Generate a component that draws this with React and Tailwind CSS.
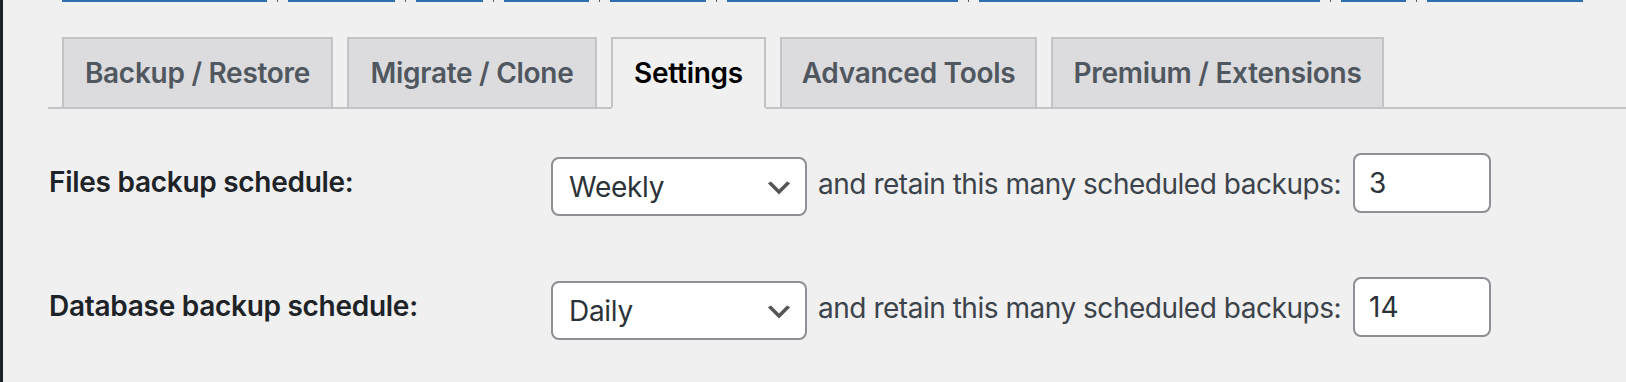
export default function App() {
  const links = [205, 107, 67, 85, 96, 231, 341, 65, 156];
  const tabs = [
    { label: "Backup / Restore", w: "w-[271px]" },
    { label: "Migrate / Clone", w: "w-[250px]" },
    { label: "Settings", w: "w-[155px]", active: true },
    { label: "Advanced Tools", w: "w-[257px]" },
    { label: "Premium / Extensions", w: "w-[333px]" },
  ];
  const rows = [
    { label: "Files backup schedule:", value: "Weekly", keep: "3" },
    { label: "Database backup schedule:", value: "Daily", keep: "14" },
  ];
  return (
    <div className="flex h-[382px] w-[1626px] overflow-hidden bg-[#f0f0f1] [font-family:Inter,'Liberation_Sans',sans-serif]">
      <div className="w-[3px] shrink-0 bg-[#1d2327]" />
      <div className="flex-1 pl-[45px]">
        <div className="ml-[14px] flex h-[2px] items-start gap-[10px]">
          {links.map((w, i) => (
            <div key={i} className="flex items-start gap-[10px]">
              {i > 0 && <div className="h-[2px] w-[1px] bg-[#50575e]" />}
              <div className="h-[2px] bg-[#2f6fb0]" style={{ width: w }} />
            </div>
          ))}
        </div>
        <div className="mt-[35px] flex h-[70px] items-start border-b-2 border-[#c3c4c7] box-content">
          {tabs.map((t) => (
            <div
              key={t.label}
              className={
                t.active
                  ? `ml-[14px] flex h-[72px] items-center justify-center border-2 border-[#c3c4c7] border-b-[#f0f0f1] bg-[#f0f0f1] text-[28px] font-semibold leading-[48px] text-black ${t.w}`
                  : `ml-[14px] flex h-[70px] items-center justify-center border-2 border-b-0 border-[#c3c4c7] bg-[#dcdcde] text-[28px] font-semibold leading-[48px] text-[#50575e] ${t.w}`
              }
            >
              <span className="whitespace-nowrap tracking-[-0.01em]">{t.label}</span>
            </div>
          ))}
        </div>
        <div className="mt-[44px] flex flex-col gap-[64px] pl-[1px]">
          {rows.map((r) => (
            <div key={r.label} className="flex h-[60px] items-start">
              <div className="mt-[9px] w-[502px] shrink-0 whitespace-nowrap text-[28px] font-semibold leading-[40px] tracking-[-0.01em] text-[#1d2327]">
                {r.label}
              </div>
              <div className="mt-[4px] flex h-[59px] w-[256px] shrink-0 items-center justify-between rounded-[8px] border-2 border-[#8c8f94] bg-white pl-[16px] pr-[10px]">
                <span className="text-[28px] leading-[40px] tracking-[-0.01em] text-[#2c3338]">{r.value}</span>
                <svg className="mt-[2px]" width="32" height="32" viewBox="0 0 20 20">
                  <path d="M5 6l5 5 5-5 2 1-7 7-7-7 2-1z" fill="#555" />
                </svg>
              </div>
              <div className="ml-[11px] mt-[11px] whitespace-nowrap text-[28px] leading-[40px] tracking-[-0.017em] text-[#3c434a]">
                and retain this many scheduled backups:
              </div>
              <div className="ml-[12px] flex h-[60px] w-[138px] shrink-0 items-center rounded-[8px] border-2 border-[#8c8f94] bg-white pl-[14px]">
                <span className="text-[28px] leading-[40px] text-[#2c3338]">{r.keep}</span>
              </div>
            </div>
          ))}
        </div>
      </div>
    </div>
  );
}
